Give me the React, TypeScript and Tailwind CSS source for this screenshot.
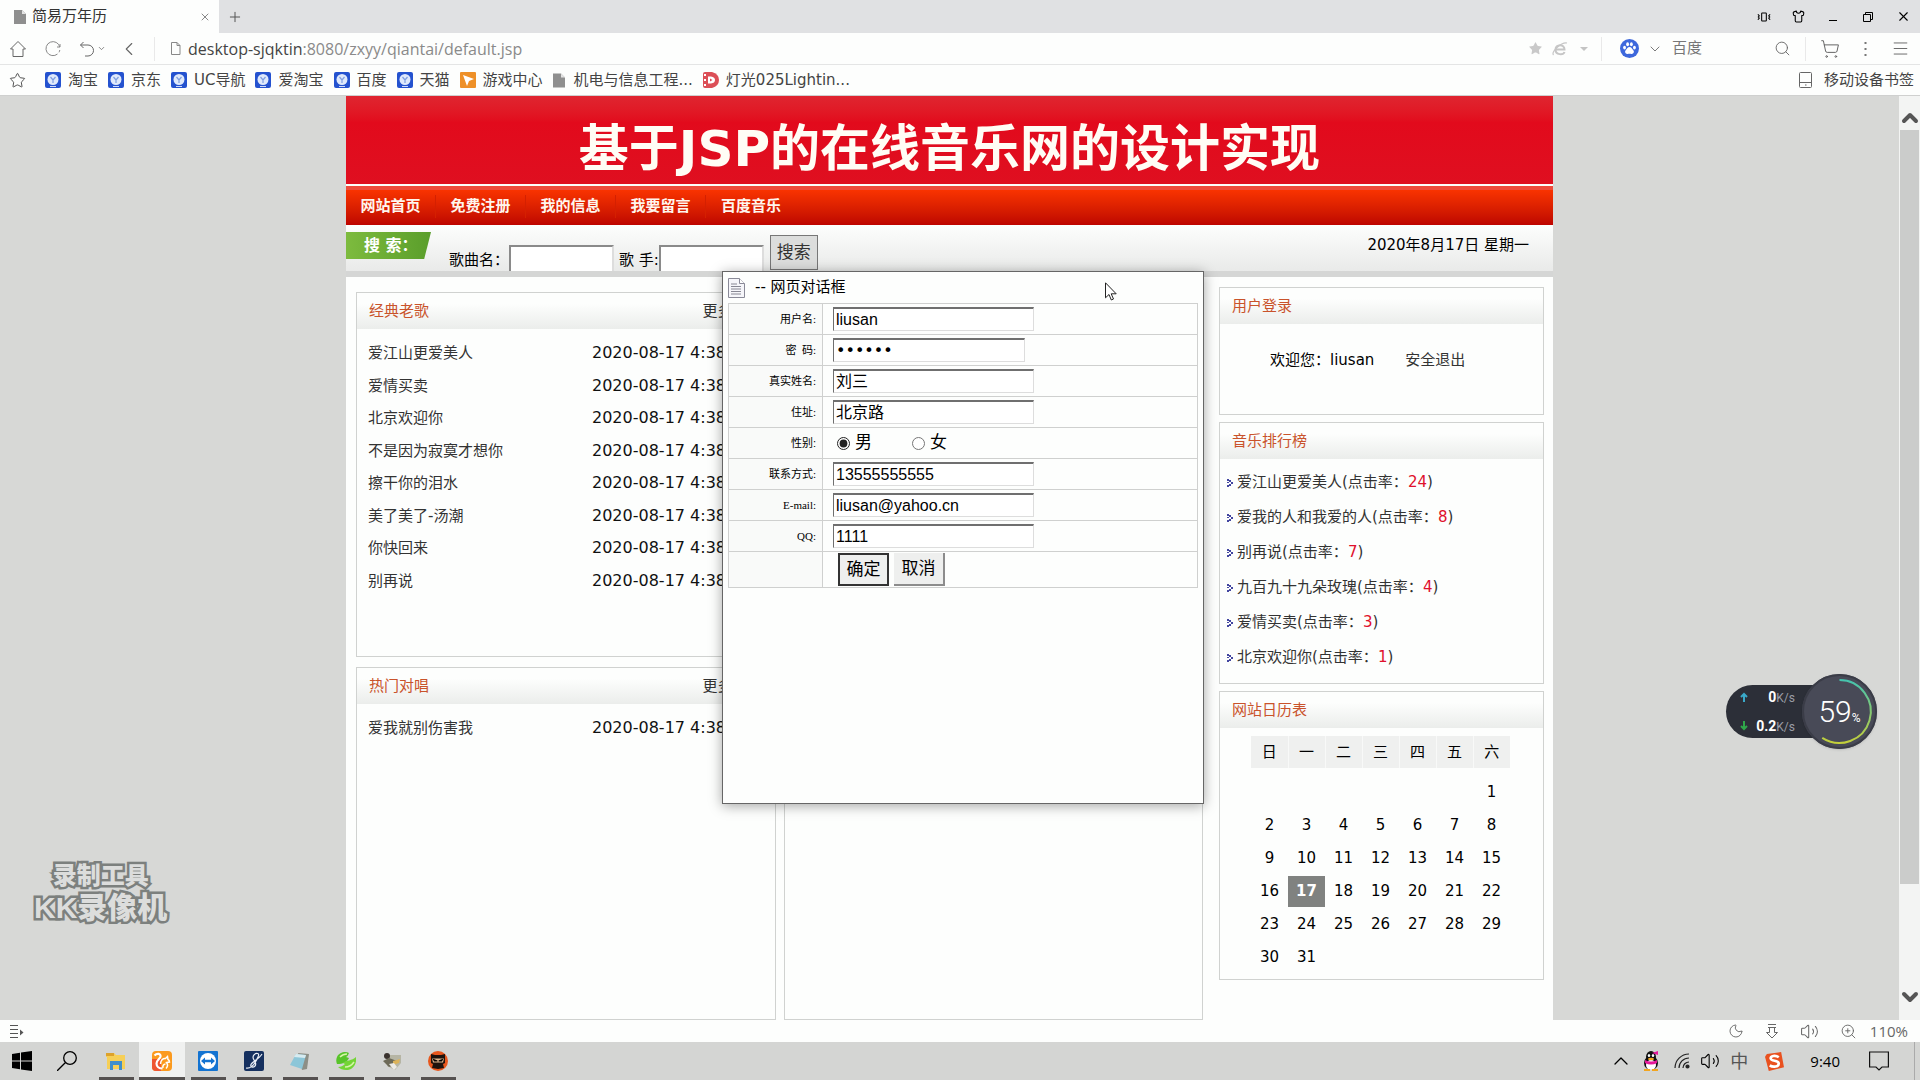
import type { ReactNode } from 'react';
import {
  ChevronDown,
  ChevronLeft,
  ChevronUp,
  Menu,
  Moon,
  Plus,
  Search,
  Shirt,
  ShoppingCart,
  Star,
  Vibrate,
  Volume2,
  X,
  ZoomIn,
} from 'lucide-react';

const bookmarks = [
  { label: '淘宝', icon: 'blue' },
  { label: '京东', icon: 'blue' },
  { label: 'UC导航', icon: 'blue' },
  { label: '爱淘宝', icon: 'blue' },
  { label: '百度', icon: 'blue' },
  { label: '天猫', icon: 'blue' },
  { label: '游戏中心', icon: 'game' },
  { label: '机电与信息工程...', icon: 'page' },
  { label: '灯光025Lightin...', icon: 'disc' },
];

const navItems = ['网站首页', '免费注册', '我的信息', '我要留言', '百度音乐'];

const oldSongs = [
  '爱江山更爱美人',
  '爱情买卖',
  '北京欢迎你',
  '不是因为寂寞才想你',
  '擦干你的泪水',
  '美了美了-汤潮',
  '你快回来',
  '别再说',
];

const ranking = [
  { name: '爱江山更爱美人', hits: 24 },
  { name: '爱我的人和我爱的人', hits: 8 },
  { name: '别再说', hits: 7 },
  { name: '九百九十九朵玫瑰', hits: 4 },
  { name: '爱情买卖', hits: 3 },
  { name: '北京欢迎你', hits: 1 },
];

const weekDays = ['日', '一', '二', '三', '四', '五', '六'];

// August 2020 starts on a Saturday
const weeks = [0, 1, 2, 3, 4, 5].map(w =>
  weekDays.map((_, d) => {
    const day = w * 7 + d - 5;
    return day >= 1 && day <= 31 ? day : null;
  })
);

const TODAY = 17;

function PageIcon({ className }: { className: string }) {
  return (
    <svg viewBox="0 0 12 14" className={className} aria-hidden="true">
      <path d="M0 0h8l4 4v10H0z" fill="#8f8f8f" />
      <path d="M8 0v4h4z" fill="#e4e4e4" />
    </svg>
  );
}

function BookmarkIcon({ type }: { type: string }) {
  if (type === 'page') return <PageIcon className="mr-[2px] h-[15px] w-3" />;
  if (type === 'game') {
    return (
      <svg viewBox="0 0 16 16" className="size-4">
        <rect width="16" height="16" rx="1" fill="#ee9028" />
        <path d="M3 3l11 4-5 2-2 5z" fill="#fff" />
      </svg>
    );
  }
  if (type === 'disc') {
    return (
      <svg viewBox="0 0 16 16" className="size-4">
        <path d="M2 0h7q7 2 7 8t-7 8H2q-2 0-2-2V2q0-2 2-2z" fill="#dc4f57" />
        <path d="M1 2h2v2H1zM1 7h2v2H1zM1 12h2v2H1z" fill="#fff" />
        <path d="M5 4.500h3q4 .5 4 3.500t-4 3.500H5z" fill="#fff" />
        <path d="M7 6.500L9.500 8 7 9.500z" fill="#dc4f57" />
      </svg>
    );
  }
  return (
    <svg viewBox="0 0 16 16" className="size-4">
      <rect width="16" height="16" rx="2" fill="#2452cf" />
      <circle cx="8" cy="7.500" r="5.500" fill="#dfe9fb" />
      <path d="M5.500 5l2.500 3 2.500-3M8 8v3" stroke="#7f9fe0" strokeWidth="1.200" fill="none" />
      <path d="M5 14.500h6" stroke="#cfdcf8" />
    </svg>
  );
}

function BrowserChrome() {
  return (
    <header className="shrink-0 bg-[#fdfefd] text-[#444]">
      <div className="flex h-[33px] items-center bg-[#e0e1e3]">
        <div className="flex h-full w-[219px] items-center bg-[#fdfefd] pr-2 pl-[14px]">
          <PageIcon className="h-[14px] w-3" />
          <span className="ml-[6px] flex-1 text-[15px] text-[#333]">简易万年历</span>
          <button aria-label="关闭标签" className="text-[#888]">
            <X size={12} strokeWidth={2} />
          </button>
        </div>
        <button aria-label="新建标签" className="ml-2 text-[#555]">
          <Plus size={16} strokeWidth={1.5} />
        </button>
        <div className="ml-auto flex items-center gap-[21px] pr-[9px] text-black">
          <button aria-label="窗口"><Vibrate size={14} strokeWidth={1.8} /></button>
          <button aria-label="皮肤"><Shirt size={13} strokeWidth={2} /></button>
          <button aria-label="最小化" className="flex h-2 w-[14px] items-end justify-center">
            <span className="h-px w-2 bg-black" />
          </button>
          <button aria-label="还原">
            <svg viewBox="0 0 14 14" className="size-[14px]" fill="none" stroke="currentColor">
              <path d="M2.500 4.500h7v7h-7zM4.500 4.500v-2h7v7h-2" />
            </svg>
          </button>
          <button aria-label="关闭"><X size={15} strokeWidth={1.8} /></button>
        </div>
      </div>

      <div className="flex h-8 items-center border-b border-[#e4e5e5] pr-[10px] pl-[9px] text-[#666]">
        <button aria-label="主页">
          <svg viewBox="0 0 18 18" className="size-[18px]" fill="none" stroke="currentColor">
            <path d="M1.500 9L9 1.500 16.500 9M1.500 9H4v7.500h10V9h2.500" />
          </svg>
        </button>
        <button aria-label="刷新" className="ml-[18px]">
          <svg viewBox="0 0 16 16" className="size-4" fill="none" stroke="#888">
            <path d="M12.500 13A7 7 0 1 1 14.800 6M14.800 9a7 7 0 0 1-.8 2.300M12 6h3V3" />
          </svg>
        </button>
        <button aria-label="撤销" className="ml-[18px] flex items-center gap-[2px]">
          <svg viewBox="0 0 16 16" className="size-4" fill="none" stroke="currentColor">
            <path d="M4.500 1L1.500 4l3 3M1.500 4H9a5.500 5.500 0 0 1 0 11H6" />
          </svg>
          <ChevronDown size={9} strokeWidth={2} />
        </button>
        <button aria-label="后退" className="ml-3"><ChevronLeft size={22} strokeWidth={1.2} /></button>
        <span className="ml-[14px] h-6 w-px bg-[#e9e9e9]" />
        <svg viewBox="0 0 10 13" className="ml-4 h-[13px] w-[10px]" fill="none" stroke="#888">
          <path d="M.5.500h5.500l3 3v9H.5zM6 .5v3h3" />
        </svg>
        <p className="ml-[7px] font-['Open_Sans',sans-serif] text-[16px] text-[#8a8a8a]">
          <span className="text-[#444]">desktop-sjqktin</span>:8080/zxyy/qiantai/default.jsp
        </p>
        <div className="ml-auto flex items-center">
          <Star size={15} fill="#c9c9c9" stroke="none" />
          <svg viewBox="0 0 16 14" className="ml-[9px] h-[14px] w-4" fill="none" stroke="#c6c6c6" strokeWidth="2">
            <path d="M4 7.500h8.500c0-6-9-5.500-9 0 0 6 8 5.500 9 2.500" />
            <path d="M1.500 13C-1 10 9 0 15 1" strokeWidth="1.200" />
          </svg>
          <span className="ml-3 border-x-4 border-t-4 border-x-transparent border-t-[#c4c4c4]" />
          <span className="ml-[13px] h-6 w-px bg-[#e9e9e9]" />
          <svg viewBox="0 0 20 20" className="ml-[18px] size-[19px]">
            <circle cx="10" cy="10" r="10" fill="#3e68dc" />
            <g fill="#fff">
              <ellipse cx="4.800" cy="9" rx="1.500" ry="2" />
              <ellipse cx="8" cy="5.500" rx="1.500" ry="2.200" />
              <ellipse cx="12" cy="5.500" rx="1.500" ry="2.200" />
              <ellipse cx="15.200" cy="9" rx="1.500" ry="2" />
              <path d="M10 8.500c2 0 2.500 2 3.800 3.200 1.800 1.800.4 4.300-1.800 4-1.300-.3-2.700-.3-4 0-2.200.3-3.600-2.200-1.800-4C7.500 10.500 8 8.500 10 8.500z" />
            </g>
          </svg>
          <ChevronDown size={16} strokeWidth={1.3} className="ml-2" />
          <input
            aria-label="搜索引擎"
            placeholder="百度"
            className="ml-[9px] w-[92px] bg-transparent text-[15px] outline-none placeholder:text-[#777]"
          />
          <button aria-label="搜索" className="ml-[10px]"><Search size={17} strokeWidth={1.3} /></button>
          <span className="ml-[14px] h-6 w-px bg-[#e9e9e9]" />
          <button aria-label="购物车" className="ml-[14px]"><ShoppingCart size={20} strokeWidth={1.2} /></button>
          <svg viewBox="0 0 3 16" className="ml-6 h-4 w-[3px]" fill="#777">
            <path d="M.5 1h2v2h-2zM.5 7h2v2h-2zM.5 13h2v2h-2z" />
          </svg>
          <button aria-label="菜单" className="ml-6"><Menu size={19} strokeWidth={1.2} /></button>
        </div>
      </div>

      <div className="flex h-[31px] items-center border-b border-[#cfd0cf] pr-[6px] pl-[9px]">
        <Star size={17} strokeWidth={1.3} />
        <nav className="ml-[19px] flex items-center gap-[10px] text-[15px]">
          {bookmarks.map(b => (
            <a key={b.label} href="#" className="flex items-center gap-[7px]">
              <BookmarkIcon type={b.icon} />
              {b.label}
            </a>
          ))}
        </nav>
        <a href="#" className="ml-auto flex items-center gap-3 text-[15px]">
          <svg viewBox="0 0 13 16" className="h-4 w-[13px]" fill="none" stroke="#666">
            <rect x=".5" y=".5" width="12" height="15" rx="1" />
            <path d="M1 10.500h11M6 13h1.500" />
          </svg>
          移动设备书签
        </a>
      </div>
    </header>
  );
}

interface PanelProps {
  title?: string;
  more?: boolean;
  className?: string;
  children?: ReactNode;
}

function Panel({ title, more, className = '', children }: PanelProps) {
  return (
    <section className={`border border-[#d0d2d0] bg-[#fdfefd] ${className}`}>
      <div className="flex h-9 items-center justify-between bg-linear-to-b from-[#fdfefd] from-30% to-[#ebedeb] pr-[42px] pl-3">
        <h2 className="text-[15px] text-[#c9532b]">{title}</h2>
        {more && <a href="#" className="text-[15px] text-[#333]">更多</a>}
      </div>
      {children}
    </section>
  );
}

function SongRow({ name }: { name: string }) {
  return (
    <li className="grid grid-cols-[224px_1fr] items-center pl-[11px] whitespace-nowrap">
      <a href="#" className="text-[15px] text-[#333]">{name}</a>
      <span className="text-[16px] text-[#111]">2020-08-17 4:38</span>
    </li>
  );
}

function SiteHeader() {
  return (
    <>
      <div className="flex h-[88px] items-center justify-center bg-linear-to-b from-[#df2530] via-[#e20a1c] via-30% to-[#df0f20] pt-[18px]">
        <h1 className="text-[50px] leading-none font-bold whitespace-nowrap text-[#fffdf5]">
          基于JSP的在线音乐网的设计实现
        </h1>
      </div>
      <nav className="mt-[2px] flex h-[39px] items-center border-t-4 border-[#ee4b3c] bg-linear-to-b from-[#f93300] to-[#be0400] pb-[2px] text-[15px] font-bold text-[#fff6ee]">
        {navItems.map(item => (
          <a key={item} href="#" className="w-[90px] border-r border-[#d52000] text-center last:border-r-0">
            {item}
          </a>
        ))}
      </nav>
      <div className="flex h-[46px] items-start overflow-hidden bg-linear-to-b from-[#fdfefd] to-[#e9eae9] text-[15px] text-black">
        <div className="mt-[7px] flex h-[27px] w-[85px] items-center bg-linear-to-r from-[#7dbb3e] to-[#5a9e2b] pl-[18px] text-[16px] font-bold text-white [clip-path:polygon(0_0,100%_0,92%_100%,0_100%)]">
          搜 索：
        </div>
        <form className="ml-[18px] flex items-start" onSubmit={e => e.preventDefault()}>
          <label htmlFor="song" className="mt-6">歌曲名：</label>
          <input id="song" className="mt-5 h-7 w-[105px] border-2 border-[#8a8a8a] border-r-[#ddd] bg-white px-1" />
          <label htmlFor="singer" className="mt-6 ml-[5px]">歌 手:</label>
          <input id="singer" className="mt-5 h-7 w-[105px] border-2 border-[#8a8a8a] border-r-[#ddd] bg-white px-1" />
          <button className="mt-[10px] ml-[6px] h-[35px] w-12 border border-[#777] bg-[#dcdddc] text-[17px] text-[#333]">
            搜索
          </button>
        </form>
        <p className="mt-[9px] mr-6 ml-auto">2020年8月17日 星期一</p>
      </div>
      <div className="h-[6px] bg-[#d5d6d5]" />
    </>
  );
}

function Calendar() {
  return (
    <table className="mt-2 ml-[31px] text-center text-[15px] text-black">
      <thead>
        <tr className="h-8">
          {weekDays.map(d => (
            <th key={d} className="w-[37px] border-r border-[#f8f9f8] bg-[#eff0ef] font-normal last:border-r-0">{d}</th>
          ))}
        </tr>
      </thead>
      <tbody className="before:block before:h-2">
        {weeks.map((week, i) => (
          <tr key={i}>
            {week.map((day, j) => (
              <td key={j} className="p-0">
                <span
                  className={
                    day === TODAY
                      ? 'my-px flex h-[31px] items-center justify-center bg-[#808280] font-bold text-white'
                      : 'my-px flex h-[31px] items-center justify-center'
                  }
                >
                  {day}
                </span>
              </td>
            ))}
          </tr>
        ))}
      </tbody>
    </table>
  );
}

function Sidebar() {
  return (
    <aside className="-mt-[5px] flex w-[325px] shrink-0 flex-col gap-[7px]">
      <Panel title="用户登录" className="h-[128px]">
        <p className="mt-[25px] ml-[50px] flex gap-[31px] text-[15px]">
          <span className="text-black">欢迎您：liusan</span>
          <a href="#" className="text-[#333]">安全退出</a>
        </p>
      </Panel>
      <Panel title="音乐排行榜" className="h-[262px]">
        <ol className="pt-[6px] pl-[7px] text-[15px] text-[#333]">
          {ranking.map(r => (
            <li key={r.name} className="flex h-[35px] items-center gap-1">
              <svg viewBox="0 0 6 8" className="h-2 w-[6px]" fill="#4346a0">
                <path d="M0 0h2v2H0zM2 1h2v2H2zM4 3h2v2H4zM2 5h2v2H2zM0 6h2v2H0zM0 3h2v1H0z" />
              </svg>
              <a href="#">
                {r.name}(点击率：<span className="text-[#e0102c]">{r.hits}</span>)
              </a>
            </li>
          ))}
        </ol>
      </Panel>
      <Panel title="网站日历表" className="pb-[5px]">
        <Calendar />
      </Panel>
    </aside>
  );
}

interface FieldProps {
  id: string;
  label: string;
  value: string;
  type?: string;
}

function Field({ id, label, value, type = 'text' }: FieldProps) {
  return (
    <tr className="h-[31px] border border-[#cfd0cf]">
      <th className="w-[94px] border-r border-[#cfd0cf] bg-[#f9faf9] pr-[6px] text-right font-['Liberation_Serif','Noto_Sans_CJK_SC',serif] text-[11px] font-normal">
        <label htmlFor={id}>{label}</label>
      </th>
      <td className="py-0 pl-[10px]">
        <input
          id={id}
          type={type}
          defaultValue={value}
          className={
            type === 'password'
              ? "block h-6 w-48 border border-t-2 border-[#ddd] border-t-[#6f6f6f] border-l-[#6f6f6f] bg-white pl-[2px] font-['DejaVu_Sans',sans-serif] text-[16px]"
              : 'block h-6 w-[201px] border border-t-2 border-[#ddd] border-t-[#6f6f6f] border-l-[#6f6f6f] bg-white pl-[2px] text-[16px]'
          }
        />
      </td>
    </tr>
  );
}

function ProfileDialog() {
  return (
    <div
      role="dialog"
      aria-label="网页对话框"
      className="absolute top-[175px] left-[722px] h-[533px] w-[482px] border border-[#666] bg-[#fdfefd] px-[5px] shadow-[0_2px_12px_rgba(0,0,0,0.35)]"
    >
      <div className="flex h-[31px] items-center text-[15px] text-black">
        <svg viewBox="0 0 17 20" className="h-5 w-[17px]">
          <path d="M.5.500h11l5 5v14H.5z" fill="#f6f6fa" stroke="#8a8a98" />
          <path d="M11.500.500v5h5" fill="#fff" stroke="#8a8a98" />
          <path d="M3 6h6M3 8.500h10M3 11h10M3 13.500h10M3 16h10" stroke="#888894" />
        </svg>
        <span className="ml-[10px]">-- 网页对话框</span>
      </div>
      <form onSubmit={e => e.preventDefault()}>
        <table className="w-full border-collapse font-['Liberation_Sans','Noto_Sans_CJK_SC',sans-serif] text-black">
          <tbody>
            <Field id="username" label="用户名:" value="liusan" />
            <Field id="password" label={'密\u00a0\u00a0码:'} value="liusan" type="password" />
            <Field id="realname" label="真实姓名:" value="刘三" />
            <Field id="address" label="住址:" value="北京路" />
            <tr className="h-[31px] border border-[#cfd0cf]">
              <th className="border-r border-[#cfd0cf] bg-[#f9faf9] pr-[6px] text-right text-[11px] font-normal">性别:</th>
              <td className="pl-[14px]">
                <div className="flex items-center gap-10 text-[17px] leading-6">
                  <label className="flex items-center gap-[5px]">
                    <input type="radio" name="sex" defaultChecked className="size-[13px] accent-[#222]" />男
                  </label>
                  <label className="flex items-center gap-[5px]">
                    <input type="radio" name="sex" className="size-[13px]" />女
                  </label>
                </div>
              </td>
            </tr>
            <Field id="phone" label="联系方式:" value="13555555555" />
            <Field id="email" label="E-mail:" value="liusan@yahoo.cn" />
            <Field id="qq" label="QQ:" value="1111" />
            <tr className="h-9 border border-[#cfd0cf]">
              <th className="border-r border-[#cfd0cf] bg-[#f9faf9]" />
              <td className="pl-[15px]">
                <div className="flex gap-[5px] text-[17px]">
                  <button className="h-[33px] w-[51px] border-2 border-[#333] bg-[#eeefee]">确定</button>
                  <button className="h-[33px] w-[51px] border-r-2 border-b-2 border-[#8c8c8c] bg-[#eeefee]">取消</button>
                </div>
              </td>
            </tr>
          </tbody>
        </table>
      </form>
      <svg viewBox="0 0 12 19" className="absolute top-[10px] left-[382px] h-[19px] w-3">
        <path d="M.5.800v15l3.500-3.300 2.300 5.500 2.200-1-2.300-5.200h5z" fill="#fff" stroke="#222" />
      </svg>
    </div>
  );
}

function SpeedWidget() {
  return (
    <div className="absolute top-[578px] right-[43px] flex items-center font-[Roboto,sans-serif] text-white">
      <div className="-mr-10 flex h-[53px] w-[116px] flex-col justify-center gap-2 rounded-full bg-[#2c2f38] pl-[13px] text-[14px] leading-5">
        <p className="flex w-14 items-baseline">
          <svg viewBox="0 0 10 10" className="size-[10px]" fill="none" stroke="#3aa9c9" strokeWidth="2"><path d="M5 10V2M2 5l3-3 3 3" /></svg>
          <b className="ml-auto">0</b>
          <span className="text-[12px] text-[#9a9da6]">K/s</span>
        </p>
        <p className="flex w-14 items-baseline">
          <svg viewBox="0 0 10 10" className="size-[10px]" fill="none" stroke="#2fa84a" strokeWidth="2"><path d="M5 0v8M2 5l3 3 3-3" /></svg>
          <b className="ml-auto">0.2</b>
          <span className="text-[12px] text-[#9a9da6]">K/s</span>
        </p>
      </div>
      <div className="relative flex size-[75px] items-center justify-center rounded-full bg-[#484a57] shadow">
        <svg viewBox="0 0 74 74" className="absolute inset-0" fill="none" strokeWidth="2">
          <defs>
            <linearGradient id="ring" x1="0" y1="0" x2="0" y2="1">
              <stop offset="0" stopColor="#45c3ae" />
              <stop offset="1" stopColor="#c3cf3a" />
            </linearGradient>
          </defs>
          <circle cx="37" cy="37" r="36" stroke="#3a3c47" />
          <path d="M37 6a31 31 0 1 1-17 57" stroke="url(#ring)" />
        </svg>
        <span className="text-[30px] font-light">59</span>
        <span className="mt-3 text-[12px]">%</span>
      </div>
    </div>
  );
}

function Watermark() {
  return (
    <div className="absolute top-[766px] left-[34px] flex flex-col items-center font-['Liberation_Sans','Noto_Sans_CJK_SC',sans-serif] font-black text-[#dcdddc] [-webkit-text-stroke:5px_#7c807e] [paint-order:stroke]">
      <span className="text-[24px] leading-[28px]">录制工具</span>
      <span className="text-[30px] leading-[36px]">KK录像机</span>
    </div>
  );
}

function Scrollbar() {
  return (
    <div className="flex w-[21px] shrink-0 flex-col items-center bg-[#f3f4f3] text-[#555]">
      <ChevronUp size={24} strokeWidth={4} className="mt-[10px]" />
      <div className="w-[19px] flex-[82] bg-[#cbcccb]" />
      <div className="flex-[11]" />
      <ChevronDown size={24} strokeWidth={4} className="mb-[11px]" />
    </div>
  );
}

function StatusBar() {
  return (
    <div className="flex h-[22px] shrink-0 items-center bg-[#fdfefd] pr-3 pl-[9px] text-[#666]">
      <svg viewBox="0 0 16 14" className="h-[14px] w-4" stroke="#555">
        <path d="M1 1.500h8M1 5.500h8M1 9.500h8M1 13.500h8" />
        <path d="M11 5.500l3.500 3-3.500 3z" fill="#555" stroke="none" />
      </svg>
      <div className="ml-auto flex items-center gap-[21px]">
        <Moon size={16} strokeWidth={1.4} />
        <svg viewBox="0 0 14 15" className="h-[15px] w-[14px]" fill="none" stroke="currentColor">
          <path d="M3 .5h8M3 3.500h8M4.500 3.500v5H1.500L7 14l5.500-5.500h-3v-5" />
        </svg>
        <Volume2 size={19} strokeWidth={1.3} />
        <ZoomIn size={17} strokeWidth={1.3} />
        <span className="-ml-2 font-['Open_Sans',sans-serif] text-[15px]">110%</span>
      </div>
    </div>
  );
}

// task bar programs, drawn on a 20x20 grid
const apps: { name: string; active?: boolean; art: ReactNode }[] = [
  {
    name: '文件资源管理器',
    art: (
      <>
        <path d="M0 2h8l2 2h9v14H1V6H0z" fill="#f6cf57" />
        <path d="M0 2h8v3H0z" fill="#dda22c" />
        <path d="M4 10h12v9h-3v-5H7v5H4z" fill="#3f8ecb" />
      </>
    ),
  },
  {
    name: 'UC浏览器',
    active: true,
    art: (
      <>
        <rect width="20" height="20" rx="4" fill="#fb9a1e" />
        <path d="M0 8h9v12H4a4 4 0 0 1-4-4z" fill="#ee5532" />
        <path d="M2.500 4.500C5 2 9 2.500 8.500 5.500 8 8 4.500 9 4.500 12.500c0 3 2.500 5 6 5" fill="none" stroke="#fff" strokeWidth="2.200" />
        <path d="M8.500 13c0-4 3-6 5-5.500l2-2 .5 3c1 .5 1.500 1.500 1.500 2.500l-3 .5c1.500 2 1 4.500-.5 6M11 17c-.5-2 .5-4 2.500-4" fill="none" stroke="#fff" strokeWidth="1.500" />
      </>
    ),
  },
  {
    name: 'TeamViewer',
    art: (
      <>
        <rect width="20" height="20" rx="1" fill="#1373d1" />
        <circle cx="10" cy="10" r="8" fill="#fff" />
        <path d="M3 10l4-3.500v2.300h6V6.500l4 3.500-4 3.500v-2.300H7v2.300z" fill="#1373d1" />
      </>
    ),
  },
  {
    name: 'SQL 工具',
    art: (
      <>
        <rect width="20" height="20" rx="2" fill="#15305f" />
        <path d="M2 17c4 1 8-3 10-7s4-7 1.500-7.500S8 5 9.500 8s3.500 5 1.500 7-5 1-4-1.500S15 8 18 3" fill="none" stroke="#e8edf5" strokeWidth="1.200" />
      </>
    ),
  },
  {
    name: '记事本',
    art: (
      <>
        <path d="M8 2l11 1-2 15-5 1z" fill="#8d8f86" />
        <path d="M6 3l10 1-4 14L0 14z" fill="#8cc6d8" />
        <path d="M6 3l10 1-1 3L4 6z" fill="#d7ebf0" />
      </>
    ),
  },
  {
    name: '绿色软件',
    art: (
      <>
        <path d="M1 6c2-5 9-6 12-4-1 2-1 3-3 4l3 1c-2 4-6 6-12 6-1-2-1-5 0-7z" fill="#58c42a" />
        <path d="M20 6c1 7-3 13-10 13-3 0-6-1-8-3 3 0 5-1 7-3l-2-1c3-3 9-2 13-6z" fill="#74d536" />
        <path d="M4 6c2-2 4-3 7-3M9 16c4 0 7-2 9-5" stroke="#d6f5a8" strokeWidth="1.500" fill="none" />
      </>
    ),
  },
  {
    name: '相册',
    art: (
      <>
        <path d="M8 4h11v8l-6 7-8-4z" fill="#b6b5a4" />
        <circle cx="5" cy="5" r="3" fill="#3a322e" />
        <path d="M1 10l6-3 8 3-3 4-5 2z" fill="#6d6a58" />
        <path d="M11 10l7-2-1 4-6 2z" fill="#dcb35a" />
        <path d="M7 13l5-1 3 4-3 3z" fill="#eceae6" />
      </>
    ),
  },
  {
    name: '忍者',
    art: (
      <>
        <circle cx="10" cy="10" r="10" fill="#e8571d" />
        <path d="M3 3l4 1h6l4-1v9l-2 1 1 4-6 1-6-1 1-4-2-1z" fill="#1d120d" />
        <path d="M4 7.500h12l-1 4H5z" fill="#e2b890" />
        <path d="M4.500 7.500l5 2v1H6zM15.500 7.500l-5 2v1H14z" fill="#000" />
      </>
    ),
  },
];

function Taskbar() {
  return (
    <footer className="flex h-[38px] shrink-0 items-stretch bg-[#d4d5d3] pr-[5px] text-black">
      <button aria-label="开始" className="flex w-11 items-center justify-center">
        <svg viewBox="0 0 20 20" className="size-5">
          <path d="M0 3l8-1.200v7.700H0zM9 1.600L20 0v9.500H9zM0 10.500h8v7.700L0 17zM9 10.500h11V20L9 18.400z" />
        </svg>
      </button>
      <button aria-label="搜索" className="flex w-[46px] items-center justify-center">
        <svg viewBox="0 0 20 20" className="size-5" fill="none" stroke="currentColor" strokeWidth="1.300">
          <circle cx="13" cy="7" r="6.300" />
          <path d="M8.500 11.500L0 20" />
        </svg>
      </button>
      <div className="ml-[3px] flex">
        {apps.map(app => (
          <button
            key={app.name}
            aria-label={app.name}
            className={
              app.active
                ? 'flex w-[46px] flex-col items-center justify-between bg-[#f0f1f0] pt-[9px]'
                : 'flex w-[46px] flex-col items-center justify-between pt-[9px]'
            }
          >
            <svg viewBox="0 0 20 20" className="size-5">{app.art}</svg>
            <span className={app.active ? 'h-[3px] w-full bg-[#555150]' : 'h-[3px] w-[35px] bg-[#555150]'} />
          </button>
        ))}
      </div>
      <div className="ml-auto flex items-center">
        <ChevronUp size={24} strokeWidth={1.3} />
        <svg viewBox="0 0 16 20" className="ml-[10px] h-5 w-4">
          <ellipse cx="8" cy="12" rx="7" ry="7" fill="#111" />
          <ellipse cx="8" cy="6" rx="5" ry="6" fill="#111" />
          <ellipse cx="8" cy="14" rx="5" ry="5" fill="#fff" />
          <path d="M2 9c4 2 8 2 12 0v3c-4 2-8 2-12 0z" fill="#e5199a" />
          <path d="M9 2l6-2v4z" fill="#e5199a" />
          <ellipse cx="6" cy="4.500" rx="1.200" ry="1.600" fill="#fff" />
          <ellipse cx="10" cy="4.500" rx="1.200" ry="1.600" fill="#fff" />
          <ellipse cx="8" cy="8" rx="3" ry="1.200" fill="#f2a51f" />
          <path d="M1 18h6v2H1zM9 18h6v2H9z" fill="#f2a51f" />
        </svg>
        <svg viewBox="0 0 16 16" className="ml-[15px] size-4" fill="none" stroke="#222" strokeWidth="1.200">
          <path d="M1 15A14 14 0 0 1 15 1M5 15A10 10 0 0 1 15 5M9 15a6 6 0 0 1 6-6" />
          <circle cx="13.500" cy="13.500" r="1.500" fill="#222" />
        </svg>
        <Volume2 size={20} strokeWidth={1.3} className="ml-[10px]" />
        <span className="ml-[10px] text-[18px] text-[#555]">中</span>
        <svg viewBox="0 0 20 20" className="ml-[17px] size-[19px]">
          <path d="M2 2l15-2 3 16-16 4L0 5z" fill="#e9511f" />
          <path d="M14.500 5.500C11 3 5.500 4 6 7s8.500 1.500 8.500 5-6 4.500-9.500 2" fill="none" stroke="#fff" strokeWidth="2.800" />
        </svg>
        <time className="ml-[26px] font-['Open_Sans',sans-serif] text-[15px]">9:40</time>
        <svg viewBox="0 0 20 20" className="ml-[29px] size-5" fill="none" stroke="#111" strokeWidth="1.200">
          <path d="M.6 1h18.800v15H13l-3 3-3-3H.6z" />
        </svg>
        <span className="ml-[25px] h-full w-px bg-[#aaa]" />
      </div>
    </footer>
  );
}

export default function App() {
  return (
    <div className="flex h-screen flex-col overflow-hidden bg-[#d7d8d6] font-['DejaVu_Sans','Noto_Sans_CJK_SC',sans-serif]">
      <BrowserChrome />
      <main className="relative flex min-h-0 flex-1">
        <div className="min-w-0 flex-1 overflow-hidden">
          <div className="mx-auto flex h-full w-full max-w-[1207px] flex-col bg-[#fdfefd]">
            <SiteHeader />
            <div className="flex min-h-0 flex-1 gap-4 pt-[15px] pr-[9px] pl-[10px]">
              <div className="grid flex-1 grid-cols-2 gap-2">
                <div className="flex flex-col gap-[10px]">
                  <Panel title="经典老歌" more className="h-[365px]">
                    <ul className="mt-2 grid h-[260px] grid-rows-8">
                      {oldSongs.map(s => (
                        <SongRow key={s} name={s} />
                      ))}
                    </ul>
                  </Panel>
                  <Panel title="热门对唱" more className="flex-1">
                    <ul className="mt-2 grid auto-rows-[32px]">
                      <SongRow name="爱我就别伤害我" />
                    </ul>
                  </Panel>
                </div>
                <Panel />
              </div>
              <Sidebar />
            </div>
          </div>
        </div>
        <Scrollbar />
        <Watermark />
        <ProfileDialog />
        <SpeedWidget />
      </main>
      <StatusBar />
      <Taskbar />
    </div>
  );
}
